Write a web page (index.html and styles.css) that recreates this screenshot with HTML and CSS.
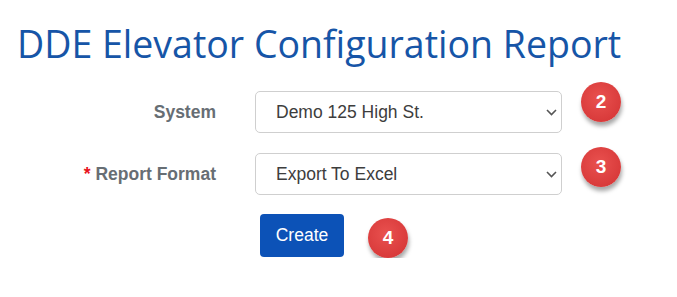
FILE: index.html
```html
<!DOCTYPE html>
<html lang="en">
<head>
  <meta charset="UTF-8">
  <title>DDE Elevator Configuration Report</title>
  <link rel="stylesheet" href="styles.css">
</head>
<body>
  <h1 class="title">DDE Elevator Configuration Report</h1>

  <form class="report-form">
    <label class="field-label" for="system">System</label>
    <div class="select-wrap">
      <select id="system" class="field-select">
        <option>Demo 125 High St.</option>
      </select>
      <svg class="chevron" width="11" height="7" viewBox="0 0 11 7"><path d="M1 1l4.5 4.5L10 1" fill="none" stroke="#555" stroke-width="1.6"/></svg>
    </div>
    <span class="badge badge-up">2</span>

    <label class="field-label" for="format"><span class="req">*</span> Report Format</label>
    <div class="select-wrap">
      <select id="format" class="field-select">
        <option>Export To Excel</option>
      </select>
      <svg class="chevron" width="11" height="7" viewBox="0 0 11 7"><path d="M1 1l4.5 4.5L10 1" fill="none" stroke="#555" stroke-width="1.6"/></svg>
    </div>
    <span class="badge badge-mid">3</span>

    <div class="actions">
      <button type="button" class="btn-create">Create</button>
      <span class="badge badge-down">4</span>
    </div>
  </form>
</body>
</html>
```

FILE: styles.css
```css
body {
  margin: 0;
  background: #ffffff;
  font-family: "Liberation Sans", Arial, sans-serif;
}

.title {
  margin: 0;
  padding: 19px 0 0 17px;
  font-family: "Open Sans", sans-serif;
  font-weight: 400;
  font-size: 37.5px;
  line-height: 50px;
  color: #1655a7;
}

.report-form {
  display: grid;
  grid-template-columns: 216px 307px 40px;
  column-gap: 0;
  row-gap: 20px;
  margin-top: 22px;
  align-items: center;
}

.field-label {
  text-align: right;
  font-weight: bold;
  font-size: 17.5px;
  color: #676e74;
}

.req {
  color: #e8121c;
}

.select-wrap {
  position: relative;
  margin-left: 39px;
  width: 307px;
}

.field-select {
  display: block;
  width: 307px;
  height: 42px;
  padding: 0 30px 0 20px;
  border: 1px solid #cfcfcf;
  border-radius: 5px;
  background: #ffffff;
  font-family: "Liberation Sans", Arial, sans-serif;
  font-size: 17.5px;
  color: #3d3d3d;
  appearance: none;
  -webkit-appearance: none;
}

.chevron {
  position: absolute;
  right: 5px;
  top: 18px;
}

.badge {
  display: flex;
  align-items: center;
  justify-content: center;
  width: 40px;
  height: 40px;
  border-radius: 50%;
  background: radial-gradient(circle at 45% 40%, #e9514f, #d93b3b 70%);
  box-shadow: 1px 4px 4px rgba(0, 0, 0, 0.35);
  color: #ffffff;
  font-weight: bold;
  font-size: 19px;
}

.badge-up {
  margin-left: 58px;
  align-self: start;
  margin-top: -9px;
}

.badge-mid {
  margin-left: 58px;
  align-self: start;
  margin-top: -6px;
}

.actions {
  grid-column: 2 / 4;
  display: flex;
  align-items: flex-start;
  gap: 24px;
  margin-left: 44px;
  margin-top: -1px;
}

.btn-create {
  width: 84px;
  height: 43px;
  border: none;
  border-radius: 4px;
  background: #0c52b7;
  color: #ffffff;
  font-family: "Liberation Sans", Arial, sans-serif;
  font-size: 17.5px;
}

.badge-down {
  margin-top: 4px;
}
```
